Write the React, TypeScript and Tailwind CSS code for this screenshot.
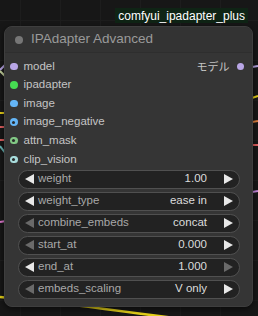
import React from "react";

type Input = { name: string; color: string; hollow?: boolean };

const inputs: Input[] = [
  { name: "model", color: "#b9a6e6" },
  { name: "ipadapter", color: "#46dd52" },
  { name: "image", color: "#64b5f6" },
  { name: "image_negative", color: "#64b5f6", hollow: true },
  { name: "attn_mask", color: "#81c784", hollow: true },
  { name: "clip_vision", color: "#a8dcdc", hollow: true },
];

type Widget = { label: string; value: string; left: boolean; right: boolean };

const widgets: Widget[] = [
  { label: "weight", value: "1.00", left: true, right: true },
  { label: "weight_type", value: "ease in", left: true, right: true },
  { label: "combine_embeds", value: "concat", left: false, right: true },
  { label: "start_at", value: "0.000", left: false, right: true },
  { label: "end_at", value: "1.000", left: true, right: false },
  { label: "embeds_scaling", value: "V only", left: false, right: true },
];

function Dot({ color, hollow }: { color: string; hollow?: boolean }) {
  return (
    <span
      className="flex h-[7.5px] w-[7.5px] items-center justify-center rounded-full"
      style={{ background: color }}
    >
      {hollow && <span className="h-[3px] w-[3px] rounded-full bg-[#2a2a2a]" />}
    </span>
  );
}

function Arrow({ dir, on }: { dir: "l" | "r"; on: boolean }) {
  return (
    <svg width="9" height="10" viewBox="0 0 9 10">
      <polygon
        points={dir === "l" ? "9,0 9,10 0,5" : "0,0 0,10 9,5"}
        fill={on ? "#e8e8e8" : "#6a6a6a"}
      />
    </svg>
  );
}

// wires and grid behind the node
function Canvas() {
  return (
    <svg className="pointer-events-none absolute inset-0" width="258" height="316">
      {[20, 60, 100, 140, 180, 220].map((x) => (
        <line key={"v" + x} x1={x + 0.5} y1="0" x2={x + 0.5} y2="316" stroke="#1d1d1d" />
      ))}
      {[20, 60, 100, 140, 180, 220, 260, 300].map((y) => (
        <line key={"h" + y} x1="0" y1={y + 0.5} x2="258" y2={y + 0.5} stroke="#1d1d1d" />
      ))}
      <line x1="0" y1="70" x2="6" y2="64" stroke="#b9a6e6" strokeWidth="2" />
      <line x1="0" y1="71" x2="6" y2="77" stroke="#c8d6a0" strokeWidth="2" />
      <line x1="0" y1="113" x2="6" y2="113" stroke="#e6cf1a" strokeWidth="2" />
      <line x1="0" y1="127" x2="6" y2="127" stroke="#e06060" strokeWidth="2" />
      <line x1="0" y1="140" x2="6" y2="140" stroke="#e06060" strokeWidth="2" />
      <line x1="0" y1="146" x2="6" y2="154" stroke="#6ab8b8" strokeWidth="2" />
      <line x1="0" y1="222" x2="6" y2="221" stroke="#e07ad0" strokeWidth="2" />
      <path d="M0 297 C 60 302 100 309 175 318" stroke="#e6d21a" strokeWidth="2.5" fill="none" />
      <line x1="252" y1="67" x2="258" y2="66" stroke="#b9a6e6" strokeWidth="2" />
      <line x1="252" y1="98" x2="258" y2="96" stroke="#e6cf1a" strokeWidth="2" />
      <line x1="252" y1="122" x2="258" y2="121" stroke="#e08040" strokeWidth="2" />
      <line x1="252" y1="145" x2="258" y2="145" stroke="#e06060" strokeWidth="2" />
      <line x1="252" y1="192" x2="258" y2="191" stroke="#c88ae0" strokeWidth="2" />
    </svg>
  );
}

export default function App() {
  return (
    <div
      className="relative h-[316px] w-[258px] overflow-hidden bg-[#171717]"
      style={{ fontFamily: '"Liberation Sans", Arial, "Noto Sans CJK JP", sans-serif' }}
    >
      <Canvas />
      <div className="relative flex flex-col">
        {/* パッケージ名バッジ */}
        <div className="ml-auto mr-[10px] mt-[8px] flex h-[15px] items-center bg-[#0f2415] px-[3px] text-[12px] leading-none text-white">
          comfyui_ipadapter_plus
        </div>

        {/* node */}
        <div className="ml-[4px] mt-[3px] flex h-[281px] w-[249px] flex-col overflow-hidden rounded-[8px] border border-[#3e3e3e] bg-[#353535] shadow-[0_2px_6px_rgba(0,0,0,0.6)]">
          <div className="flex h-[26px] items-center gap-[8px] border-b border-[#2e2e2e] bg-[#333333] pl-[10px]">
            <span className="h-[8px] w-[8px] rounded-full bg-[#777]" />
            <span className="text-[13.5px] text-[#9a9a9a]">IPAdapter Advanced</span>
          </div>

          <div className="flex flex-col pt-[4px]">
            {inputs.map((inp, i) => (
              <div key={inp.name} className="flex h-[18.6px] items-center pl-[5px] pr-[8px]">
                <Dot color={inp.color} hollow={inp.hollow} />
                <span className="ml-[6px] text-[11.5px] text-[#c4c4c4]">{inp.name}</span>
                {i === 0 && (
                  <>
                    <span
                      className="ml-auto mr-[7px] text-[11px] text-[#c4c4c4]"
                      style={{ fontFamily: '"Noto Sans CJK JP", sans-serif' }}
                    >
                      モデル
                    </span>
                    <Dot color="#b9a6e6" />
                  </>
                )}
              </div>
            ))}
          </div>

          <div className="flex flex-col gap-[3px] pl-[13px] pt-[1px]">
            {widgets.map((w) => (
              <div
                key={w.label}
                className="flex h-[19px] w-[222px] items-center rounded-full border border-[#505050] bg-[#222222] pl-[6px] pr-[6px] text-[11.5px]"
              >
                <Arrow dir="l" on={w.left} />
                <span className="ml-[4px] text-[#a8a8a8]">{w.label}</span>
                <span className="ml-auto mr-[17px] text-[#dcdcdc]">{w.value}</span>
                <Arrow dir="r" on={w.right} />
              </div>
            ))}
          </div>
        </div>
      </div>
    </div>
  );
}
